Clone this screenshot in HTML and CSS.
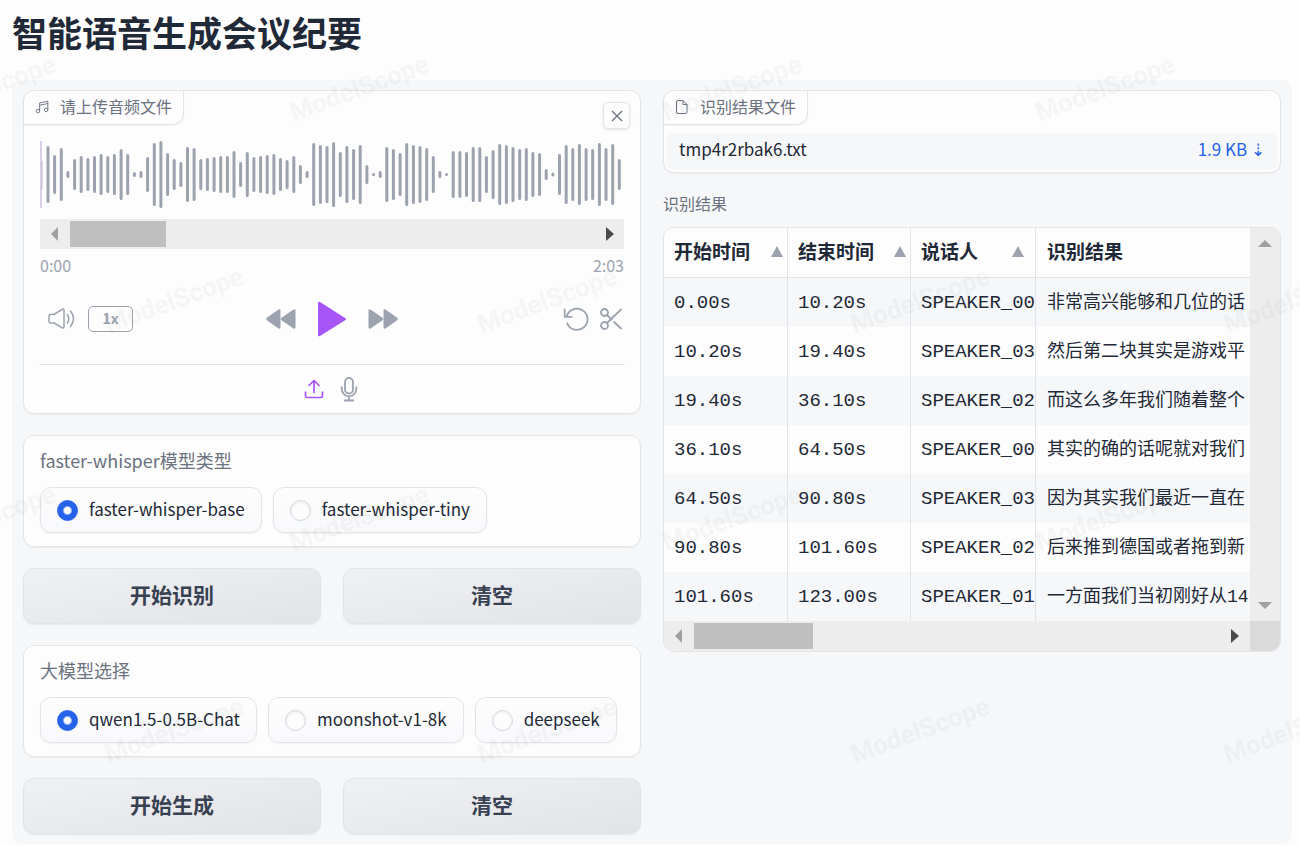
FILE: index.html
```html
<!DOCTYPE html>
<html lang="zh-CN">
<head>
<meta charset="utf-8">
<meta name="viewport" content="width=device-width, initial-scale=1">
<title>智能语音生成会议纪要</title>
<link rel="stylesheet" href="styles.css">
</head>
<body>
<h1 class="title">智能语音生成会议纪要</h1>
<main class="panel">
  <div class="column">
    <section class="card audio">
      <div class="card-head">
        <div class="tab">
          <svg class="tab-icon" width="14" height="14" viewBox="0 0 24 24" fill="none" stroke="currentColor" stroke-width="1.6"><path d="M8 19V5l14-3v15M8 9l14-3"/><circle cx="5" cy="19" r="3"/><circle cx="19" cy="17" r="3"/></svg>
          <span>请上传音频文件</span>
        </div>
        <button class="close" type="button" aria-label="关闭"><svg width="12" height="12" viewBox="0 0 12 12" fill="none" stroke="currentColor" stroke-width="1.4"><path d="M1 1l10 10M11 1L1 11"/></svg></button>
      </div>
      <div class="audio-body">
        <svg class="wave" viewBox="0 0 584 67" preserveAspectRatio="none"><path class="cursor" d="M1 0V67"/><path class="half-bar" d="M2 20V48"/><path class="bars" id="bars"/></svg>
        <div class="hscroll wave-scroll">
          <svg width="8" height="14" viewBox="0 0 8 14" fill="#a0a0a0"><path d="M8 0v14L1 7z"/></svg>
          <div class="thumb wave-thumb"></div>
          <svg class="push" width="8" height="14" viewBox="0 0 8 14" fill="#4b4b4b"><path d="M0 0v14l8-7z"/></svg>
        </div>
        <div class="times"><span>0:00</span><span>2:03</span></div>
        <div class="controls">
          <div class="group left">
            <button class="icon" type="button" aria-label="音量"><svg width="28" height="22" viewBox="0 0 28 22" fill="none" stroke="currentColor" stroke-width="1.5" stroke-linecap="round" stroke-linejoin="round"><path d="M2.500 6.500H6L14 1.300Q16 .5 16 2.500V18.500Q16 20.500 14 19.700L6 15H2.500Q1 15 1 13.500V8Q1 6.500 2.500 6.500Z"/><path d="M19.300 6.500q3 4.300 0 8.500M22.500 3q6 7.700 0 15.500"/></svg></button>
            <button class="speed" type="button">1x</button>
          </div>
          <div class="group middle">
            <button class="icon" type="button" aria-label="后退"><svg width="30" height="20" viewBox="0 0 30 20" fill="currentColor"><path d="M12.500.6Q14.500-.3 14.500 1.700V18.300Q14.500 20.300 12.500 19.400L.8 11.200Q-.4 10 .8 8.800ZM27.500.6Q29.500-.3 29.500 1.700V18.300Q29.500 20.300 27.500 19.400L15.500 11.200Q14.400 10 15.500 8.800Z"/></svg></button>
            <button class="icon play" type="button" aria-label="播放"><svg width="30" height="36" viewBox="0 0 30 36" fill="currentColor"><path d="M1 2.200Q1 0 3 1L28.500 17.200Q30 18 28.500 19L3 35Q1 36 1 34Z"/></svg></button>
            <button class="icon" type="button" aria-label="前进"><svg width="30" height="20" viewBox="0 0 30 20" fill="currentColor"><path d="M2.500.6Q.5-.3.5 1.700V18.300Q.5 20.300 2.500 19.400L14.500 11.200Q15.600 10 14.500 8.800ZM17.500.6Q15.500-.3 15.500 1.700V18.300Q15.500 20.300 17.500 19.400L29.200 11.200Q30.400 10 29.200 8.800Z"/></svg></button>
          </div>
          <div class="group right">
            <button class="icon" type="button" aria-label="重置"><svg width="26" height="24" viewBox="0 0 26 24" fill="none" stroke="currentColor" stroke-width="1.800" stroke-linecap="round" stroke-linejoin="round"><path d="M1.700 2.500v7.300H8.800M3.700 9.600A10.600 10.600 0 1 1 4.200 16.300"/></svg></button>
            <button class="icon" type="button" aria-label="剪辑"><svg width="22" height="22" viewBox="0 0 22 22" fill="none" stroke="currentColor" stroke-width="1.800" stroke-linecap="round"><circle cx="4.500" cy="4.500" r="3.500"/><circle cx="4.500" cy="17.500" r="3.500"/><path d="M7 7l4.500 4.500M14 14l7 6.500M7 15L21 1.500"/></svg></button>
          </div>
        </div>
      </div>
      <div class="sources">
        <button class="icon active" type="button" aria-label="上传"><svg width="20" height="20" viewBox="0 0 20 20" fill="none" stroke="currentColor" stroke-width="1.700" stroke-linecap="round" stroke-linejoin="round"><path d="M1.500 13v4q0 1.500 1.500 1.500h14q1.500 0 1.500-1.500v-4M10 13.500V1.500M5 6.500l5-5 5 5"/></svg></button>
        <button class="icon" type="button" aria-label="录音"><svg width="18" height="26" viewBox="0 0 18 26" fill="none" stroke="currentColor" stroke-width="1.800"><rect x="5" y="2" width="8" height="15.500" rx="4"/><path d="M1.700 10.500v2.500a7.300 7.300 0 0 0 14.600 0v-2.500M9 20.500V24.500M4 24.500h10"/></svg></button>
      </div>
    </section>

    <fieldset class="card choices">
      <legend class="choices-label">faster-whisper模型类型</legend>
      <div class="options">
        <label class="option"><input type="radio" name="whisper" checked><span>faster-whisper-base</span></label>
        <label class="option"><input type="radio" name="whisper"><span>faster-whisper-tiny</span></label>
      </div>
    </fieldset>

    <div class="actions"><button class="action" type="button">开始识别</button><button class="action" type="button">清空</button></div>

    <fieldset class="card choices">
      <legend class="choices-label">大模型选择</legend>
      <div class="options">
        <label class="option"><input type="radio" name="llm" checked><span>qwen1.5-0.5B-Chat</span></label>
        <label class="option"><input type="radio" name="llm"><span>moonshot-v1-8k</span></label>
        <label class="option"><input type="radio" name="llm"><span>deepseek</span></label>
      </div>
    </fieldset>

    <div class="actions"><button class="action" type="button">开始生成</button><button class="action" type="button">清空</button></div>
  </div>

  <div class="column results">
    <section class="card file">
      <div class="card-head file-head">
        <div class="tab">
          <svg class="tab-icon" width="14" height="14" viewBox="0 0 14 14" fill="none" stroke="currentColor" stroke-width="1" stroke-linejoin="round"><path d="M3 .5h5l4 4V12q0 1.500-1.500 1.500H3Q1.500 13.500 1.500 12V2Q1.500.5 3 .5ZM8 .5v4h4"/></svg>
          <span>识别结果文件</span>
        </div>
      </div>
      <div class="file-row"><span>tmp4r2rbak6.txt</span><a class="download" href="#">1.9 KB ⇣</a></div>
    </section>
    <div class="table-block">
      <div class="table-label" id="result-label">识别结果</div>
      <div class="table-frame">
        <div class="table-view">
          <table class="table" aria-labelledby="result-label">
            <colgroup><col class="col-start"><col class="col-end"><col class="col-speaker"><col></colgroup>
            <thead><tr>
              <th><div class="th"><span>开始时间</span><i class="sort"></i></div></th>
              <th><div class="th"><span>结束时间</span><i class="sort"></i></div></th>
              <th><div class="th th-speaker"><span>说话人</span><i class="sort"></i></div></th>
              <th><div class="th"><span>识别结果</span></div></th>
            </tr></thead>
            <tbody>
              <tr><td>0.00s</td><td>10.20s</td><td>SPEAKER_00</td><td>非常高兴能够和几位的话</td></tr>
              <tr><td>10.20s</td><td>19.40s</td><td>SPEAKER_03</td><td>然后第二块其实是游戏平</td></tr>
              <tr><td>19.40s</td><td>36.10s</td><td>SPEAKER_02</td><td>而这么多年我们随着整个</td></tr>
              <tr><td>36.10s</td><td>64.50s</td><td>SPEAKER_00</td><td>其实的确的话呢就对我们</td></tr>
              <tr><td>64.50s</td><td>90.80s</td><td>SPEAKER_03</td><td>因为其实我们最近一直在</td></tr>
              <tr><td>90.80s</td><td>101.60s</td><td>SPEAKER_02</td><td>后来推到德国或者拖到新</td></tr>
              <tr><td>101.60s</td><td>123.00s</td><td>SPEAKER_01</td><td>一方面我们当初刚好从14</td></tr>
            </tbody>
          </table>
        </div>
        <div class="vscroll">
          <svg width="14" height="7" viewBox="0 0 14 7" fill="#a0a0a0"><path d="M0 7h14L7 0z"/></svg>
          <svg width="14" height="7" viewBox="0 0 14 7" fill="#a0a0a0"><path d="M0 0h14L7 7z"/></svg>
        </div>
        <div class="hscroll">
          <svg width="8" height="14" viewBox="0 0 8 14" fill="#a0a0a0"><path d="M8 0v14L1 7z"/></svg>
          <div class="thumb table-thumb"></div>
          <svg class="push" width="8" height="14" viewBox="0 0 8 14" fill="#4b4b4b"><path d="M0 0v14l8-7z"/></svg>
        </div>
        <div class="corner"></div>
      </div>
    </div>
  </div>
</main>
<svg class="watermark" aria-hidden="true">
  <defs><pattern id="mark" width="373" height="430" patternUnits="userSpaceOnUse" x="174" y="-20">
    <text transform="translate(185 108) rotate(-20)" text-anchor="middle" y="9">ModelScope</text>
    <text transform="translate(0 320) rotate(-20)" text-anchor="middle" y="9">ModelScope</text>
    <text transform="translate(373 320) rotate(-20)" text-anchor="middle" y="9">ModelScope</text>
  </pattern></defs>
  <rect width="100%" height="100%" fill="url(#mark)"/>
</svg>
<script src="wave.js"></script>
</body>
</html>
```
FILE: styles.css
```css
* { box-sizing: border-box; }
body {
  margin: 0;
  padding: 8px 8px 2px 12px;
  background: #fdfdfd;
  color: #1f2937;
  font-family: "Noto Sans CJK SC", "Noto Sans", sans-serif;
  font-size: 17px;
}
button { font: inherit; cursor: pointer; }
svg { display: block; }
.title { margin: 0 0 24px; font-size: 35px; line-height: 48px; font-weight: 700; }
.panel {
  display: grid;
  grid-template-columns: minmax(0, 1fr) minmax(0, 1fr);
  align-items: start;
  gap: 22px;
  padding: 10px 11px;
  border-radius: 11px;
  background: #f6f7f9;
}
.column { display: flex; flex-direction: column; gap: 21px; }
.results { gap: 18px; }
.card {
  min-width: 0;
  margin: 0;
  padding: 0;
  border: 1px solid #e2e4e8;
  border-radius: 11px;
  background: #fdfdfd;
  box-shadow: 0 1px 2px rgba(0, 0, 0, .05);
}
.card-head { display: flex; justify-content: space-between; align-items: flex-start; height: 50px; }
.tab {
  display: flex;
  align-items: center;
  gap: 11px;
  padding: 3px 11px 6px;
  border: solid #e2e4e8;
  border-width: 0 1px 1px 0;
  border-radius: 0 0 11px 0;
  box-shadow: 0 1px 2px rgba(0, 0, 0, .05);
  color: #6b7280;
  font-size: 16px;
  line-height: 24px;
}
.tab-icon { margin-top: 2px; }
.close {
  display: grid;
  place-items: center;
  width: 27px;
  height: 27px;
  margin: 11px 10px 0 0;
  padding: 0;
  border: 1px solid #e2e4e8;
  border-radius: 5px;
  background: #fdfdfd;
  box-shadow: 0 1px 3px rgba(0, 0, 0, .1);
  color: #6b7280;
}
.audio-body { padding: 0 16px; }
.wave { width: 100%; height: 67px; margin-bottom: 11px; }
.wave path { fill: none; }
.cursor { stroke: #d8d0e8; stroke-width: 2; }
.half-bar { stroke: #b9bdc8; stroke-width: 1; }
.bars { stroke: #9ca3af; stroke-width: 3; stroke-linecap: round; }
.hscroll { display: flex; align-items: center; height: 30px; padding: 0 11px 0 10px; background: #ededed; }
.push { margin-left: auto; }
.thumb { height: 26px; margin-left: 12px; background: #bfbfbf; }
.wave-thumb { width: 17%; min-width: 30px; }
.wave-scroll { padding-right: 10px; }
.table-thumb { width: 21%; min-width: 30px; }
.times { display: flex; justify-content: space-between; margin: 4px 0 22px; color: #9ca3af; font-size: 16px; line-height: 24px; }
.controls {
  display: grid;
  grid-template-columns: 1fr auto 1fr;
  align-items: center;
  height: 40px;
  margin-bottom: 25px;
}
.group { display: flex; align-items: center; }
.left { gap: 12px; padding-left: 8px; }
.middle { gap: 21px; }
.right { gap: 11px; justify-content: flex-end; padding-right: 2px; }
.icon { padding: 0; border: 0; background: none; color: #9ca3af; }
.play, .active { color: #a855f7; }
.speed {
  width: 45px;
  height: 26px;
  padding: 0 0 2px;
  border: 1px solid #9ca3af;
  border-radius: 5px;
  background: none;
  color: #9ca3af;
  font-size: 14px;
  line-height: 20px;
  font-weight: 700;
}
.sources {
  display: flex;
  justify-content: center;
  align-items: center;
  gap: 16px;
  height: 49px;
  margin: 0 15px;
  padding-right: 2px;
  border-top: 1px solid #e2e4e8;
}
.choices { padding: 10px 16px 13px; }
.choices-label { float: left; width: 100%; margin-bottom: 13px; padding: 0; color: #6b7280; font-size: 18px; line-height: 28px; }
.options { display: flex; flex-wrap: wrap; gap: 11px; clear: both; }
.option {
  display: flex;
  align-items: center;
  gap: 11px;
  height: 46px;
  padding: 0 16px;
  border: 1px solid #e2e4e8;
  border-radius: 11px;
  background: linear-gradient(#fdfdfd, #f8f9fb);
  box-shadow: 0 1px 2px rgba(0, 0, 0, .05);
  line-height: 24px;
}
.option span { padding-bottom: 3px; }
.option input {
  appearance: none;
  width: 21px;
  height: 21px;
  margin: 0;
  border: 1px solid #d1d5db;
  border-radius: 50%;
  background: #fdfdfd;
  box-shadow: inset 0 1px 3px rgba(0, 0, 0, .08);
}
.option input:checked { border-color: #2563eb; background: radial-gradient(circle, #fff 3px, #2563eb 5px); box-shadow: none; }
.actions { display: grid; grid-template-columns: 1fr 1fr; gap: 22px; }
.action {
  height: 56px;
  padding: 0 20px 5px;
  border: 1px solid #e2e4e8;
  border-radius: 11px;
  background: linear-gradient(to bottom right, #f0f1f3, #e1e3e7);
  box-shadow: 0 1px 2px rgba(0, 0, 0, .07);
  color: #374151;
  font-size: 21px;
  line-height: 30px;
  font-weight: 700;
}
.file { padding-bottom: 2px; }
.file-head { height: 42px; }
.file-row {
  display: flex;
  justify-content: space-between;
  margin: 0 2px;
  padding: 3px 13px 8px;
  border-radius: 0 0 9px 9px;
  background: #f6f7f9;
  line-height: 26px;
}
.download { color: #2563eb; text-decoration: none; }
.table-label { margin-bottom: 12px; color: #6b7280; font-size: 16px; line-height: 24px; }
.table-frame {
  display: grid;
  grid-template-columns: minmax(0, 1fr) 30px;
  overflow: hidden;
  border: 1px solid #e2e4e8;
  border-radius: 11px;
}
.table-view { overflow: hidden; }
.table { width: 100%; table-layout: fixed; border-collapse: separate; border-spacing: 0; background: #fdfdfd; font-family: "Liberation Mono", "Noto Sans CJK SC", monospace; font-size: 19px; line-height: 29px; white-space: nowrap; }
.col-start { width: 124px; }
.col-end { width: 123px; }
.col-speaker { width: 125px; }
.table th, .table td { padding: 11px 0 9px 10px; border-right: 1px solid #e2e4e8; text-align: left; }
.table th:last-child, .table td:last-child { padding-left: 11px; border-right: 0; }
.table td:last-child { font-size: 18px; }
.table th { padding-top: 9px; padding-bottom: 12px; border-bottom: 1px solid #e2e4e8; font-family: "Noto Sans CJK SC", sans-serif; font-weight: 700; line-height: 28px; }
.table tbody tr:nth-child(odd) { background: #f6f7f9; }
.th { display: flex; justify-content: space-between; align-items: center; padding-right: 4px; }
.th-speaker { padding-right: 11px; }
.sort { border: solid transparent; border-width: 0 6px 11px; border-bottom-color: #9ca3af; }
.vscroll { display: flex; flex-direction: column; justify-content: space-between; align-items: center; padding: 12px 0; background: #ededed; }
.corner { background: #dadada; }
.watermark { position: absolute; inset: 0; width: 100%; height: 100%; pointer-events: none; }
.watermark text { fill: #000; fill-opacity: .03; font-family: Roboto, sans-serif; font-size: 26px; font-weight: 700; }
```
FILE: wave.js
```js
const heights = [
  57, 39, 53, 7, 31, 37, 33, 37, 41, 37, 41, 51, 41, 5, 7, 35, 63, 67, 43, 31, 25, 55,
  53, 31, 33, 35, 37, 37, 47, 25, 45, 35, 37, 39, 41, 33, 29, 37, 19, 7, 63, 59, 57, 65,
  45, 57, 51, 59, 19, 3, 7, 55, 51, 43, 63, 59, 57, 53, 37, 7, 3, 47, 47, 45, 55, 55,
  37, 49, 61, 59, 55, 51, 53, 45, 43, 11, 4, 41, 59, 53, 61, 53, 51, 63, 53, 61, 31
];
const step = 571.3 / (heights.length - 1);
document.getElementById("bars").setAttribute("d", heights.map((h, i) => {
  const x = (8 + i * step).toFixed(1);
  const half = Math.max((h - 3) / 2, 0.1);
  return `M${x} ${33.5 - half}V${33.5 + half}`;
}).join(""));
```
